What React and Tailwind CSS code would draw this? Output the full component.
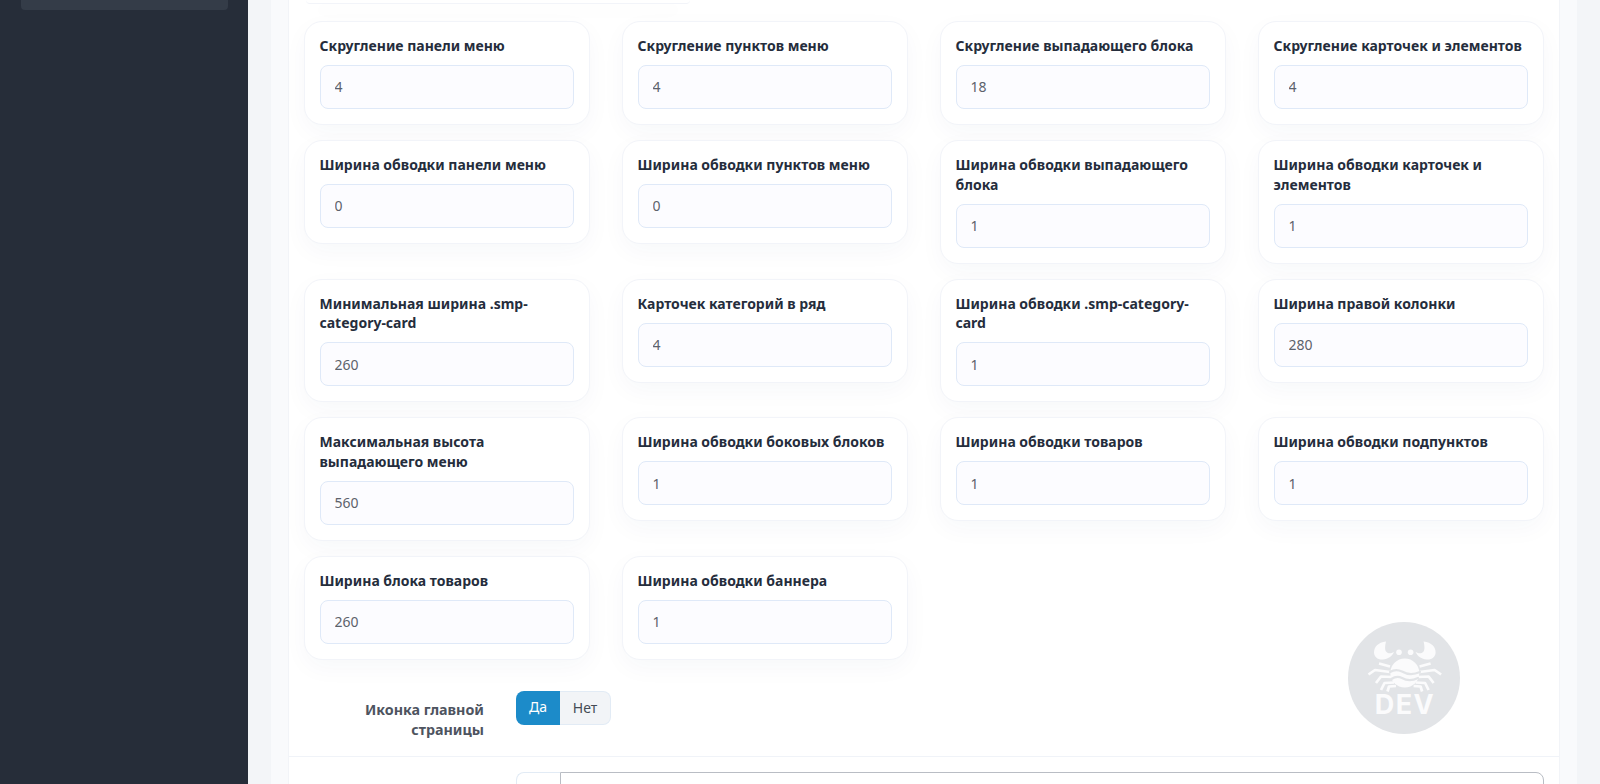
import React from 'react';

const fields = [
  ['Скругление панели меню', '4'],
  ['Скругление пунктов меню', '4'],
  ['Скругление выпадающего блока', '18'],
  ['Скругление карточек и элементов', '4'],
  ['Ширина обводки панели меню', '0'],
  ['Ширина обводки пунктов меню', '0'],
  ['Ширина обводки выпадающего блока', '1'],
  ['Ширина обводки карточек и элементов', '1'],
  ['Минимальная ширина .smp-category-card', '260'],
  ['Карточек категорий в ряд', '4'],
  ['Ширина обводки .smp-category-card', '1'],
  ['Ширина правой колонки', '280'],
  ['Максимальная высота выпадающего меню', '560'],
  ['Ширина обводки боковых блоков', '1'],
  ['Ширина обводки товаров', '1'],
  ['Ширина обводки подпунктов', '1'],
  ['Ширина блока товаров', '260'],
  ['Ширина обводки баннера', '1'],
];

const FieldCard = ({ label, value }) => (
  <div className="rounded-[18px] border border-[#f2f4f9] bg-white pt-[14px] pr-[15px] pb-[15px] pl-[14.5px] shadow-[0_8px_24px_rgba(40,60,110,0.035)]">
    <label className="mb-[9.4px] block text-[14px] leading-[19.6px] font-bold text-[#252d3c]">{label}</label>
    <input
      readOnly
      value={value}
      className="block h-[44px] w-full rounded-lg border border-[#dfe9f8] bg-[#fcfcff] px-[14px] text-[14px] text-[#5c626b] outline-none"
    />
  </div>
);

const DevBadge = () => (
  <svg viewBox="0 0 112 112" className="absolute top-[622px] left-[1348px] h-[112px] w-[112px]">
    <circle cx="56" cy="56" r="56" fill="#e2e4e7" />
    <g fill="#fbfbfc">
      <circle cx="51" cy="30.3" r="2.8" />
      <circle cx="62.6" cy="30.3" r="2.8" />
      <circle cx="56.8" cy="51" r="14.5" />
      {[0, 1].map((side) => (
        <g key={side} transform={side ? 'translate(113.6,0) scale(-1,1)' : undefined}>
          <path d="M38 19.5C30 20.5 26 25 26 30.5C26 35 30 38 35 37.5C40 37 44 34.5 46 30C42.5 32 40 31.5 38.5 30C36.5 28 37 24 38 19.5Z" />
          <g fill="none" stroke="#fbfbfc" strokeWidth="2.7" strokeLinejoin="round">
            <path d="M42 44.5L31 41.5" />
            <path d="M42 50L27 48L20.5 52.5" />
            <path d="M44 55L33 54.5L28 61" />
            <path d="M46 60.5L36.5 61L33 68" />
            <path d="M48 64L41 64.5L39.5 69.5" />
          </g>
        </g>
      ))}
    </g>
    <g fill="none" stroke="#e2e4e7" strokeWidth="2.2" strokeLinecap="round">
      <path d="M42 50C46 47.5 50 47.5 54 49.5C59 52.5 65 53 72 50" />
      <path d="M43.5 57C47 54.5 51 54.5 54 56C59 59 64 59 70 56" />
    </g>
    <text x="57" y="92" textAnchor="middle" fill="#fbfbfc" fontSize="27" fontWeight="700" letterSpacing="1.5" fontFamily="Inter, sans-serif">
      DEV
    </text>
  </svg>
);

export default function App() {
  return (
    <div className="relative flex h-[784px] overflow-hidden bg-[#f3f5f8] font-['Noto_Sans',sans-serif]">
      <aside className="w-[248px] shrink-0 bg-[#262d39] pl-[21px]">
        <div className="h-[10px] w-[207px] rounded-b-sm bg-[#343c48]" />
      </aside>

      <main className="mx-[23px] flex-1 bg-[#f9fafc] px-[17px]">
        <div className="h-full border-x border-[#f2f4f8] bg-white">
          <div className="ml-[17px] h-[4px] w-[384px] rounded-b-[18px] border-b border-[#f2f4f9] bg-white shadow-[0_8px_24px_rgba(40,60,110,0.035)]" />

          <div className="mt-[17px] grid grid-cols-4 items-start gap-x-8 gap-y-[15px] pr-[15px] pl-[15px]">
            {fields.map(([label, value]) => (
              <FieldCard key={label} label={label} value={value} />
            ))}
          </div>

          <div className="mt-[31.5px] flex gap-8 border-b border-[#f0f3f8] pb-[16.5px]">
            <div className="w-[195px] pt-[9px] pl-[56px] text-right text-[14.3px] leading-[19.6px] font-bold text-[#4e545f]">
              Иконка главной страницы
            </div>
            <div className="flex h-[34px] text-[14px] leading-[32px]">
              <span className="w-[44px] rounded-l-lg bg-[#1c8bc9] text-center text-white">Да</span>
              <span className="w-[51px] rounded-r-lg border border-l-0 border-[#e2ebf5] bg-[#f2f4f7] text-center text-[#444b55]">Нет</span>
            </div>
          </div>

          <div className="mt-[15px] flex pr-[15px] pl-[227px]">
            <div className="h-[60px] w-[44px] rounded-tl-lg border border-r-0 border-[#e2ebf5] bg-white" />
            <div className="h-[60px] flex-1 rounded-tr-lg border border-[#b9bdc4] bg-white" />
          </div>
        </div>
      </main>

      <DevBadge />
    </div>
  );
}
